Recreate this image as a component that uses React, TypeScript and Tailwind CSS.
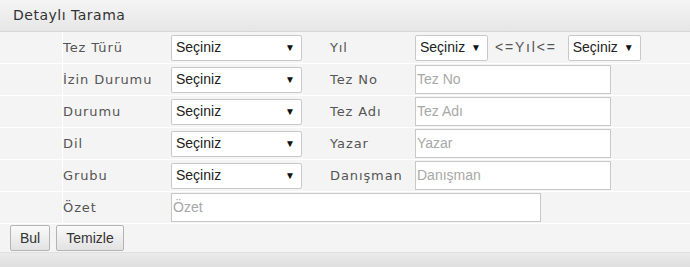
import React from 'react';

const label = 'text-[13px] text-[#555] tracking-[0.9px] font-["DejaVu_Sans",Verdana,sans-serif]';

function Select({ w }: { w: string }) {
  return (
    <div
      className={`${w} h-[26px] flex items-center justify-between pl-[4px] pr-[6px] bg-white border border-[#c8c8c8] rounded-[2px] text-[14px] text-[#222] font-["Liberation_Sans",Arial,sans-serif]`}
    >
      <span>Seçiniz</span>
      <span className="text-[10px] text-[#111]">▼</span>
    </div>
  );
}

function TextInput({ placeholder, w }: { placeholder: string; w: string }) {
  return (
    <div
      className={`${w} h-[29px] flex items-center pl-[1px] bg-white border border-[#c8c8c8] text-[14px] text-[#a8a8a8] font-["Liberation_Sans",Arial,sans-serif]`}
    >
      {placeholder}
    </div>
  );
}

function Row({ children }: { children: React.ReactNode }) {
  return <div className="flex h-[32px] items-center border-b border-white">{children}</div>;
}

function Cell({ w, children, line }: { w: string; children?: React.ReactNode; line?: boolean }) {
  return (
    <div className={`${w} h-full flex items-center shrink-0 ${line ? 'border-r border-white' : ''}`}>
      {children}
    </div>
  );
}

export default function App() {
  const rows: [string, string, string][] = [
    ['İzin Durumu', 'Tez No', 'Tez No'],
    ['Durumu', 'Tez Adı', 'Tez Adı'],
    ['Dil', 'Yazar', 'Yazar'],
    ['Grubu', 'Danışman', 'Danışman'],
  ];

  return (
    <div className="w-[690px] h-[267px] bg-[#f4f4f4] flex flex-col overflow-hidden">
      <div className="h-[32px] shrink-0 flex items-center pl-[13px] bg-gradient-to-b from-[#f5f5f5] to-[#e6e6e6] border-b border-[#d6d6d6] text-[14px] text-[#333] tracking-[0.5px] font-['DejaVu_Sans',Verdana,sans-serif]">
        Detaylı Tarama
      </div>

      <Row>
        <Cell w="w-[63px]" line />
        <Cell w="w-[108px]"><span className={label}>Tez Türü</span></Cell>
        <Cell w="w-[159px]"><Select w="w-[131px]" /></Cell>
        <Cell w="w-[85px]"><span className={label}>Yıl</span></Cell>
        <div className="flex items-center h-full">
          <Select w="w-[73px]" />
          <span className="ml-[7px] mr-[11px] text-[14px] text-[#555] font-['Liberation_Sans',Arial,sans-serif] tracking-[1.8px]">
            &lt;=Yıl&lt;=
          </span>
          <Select w="w-[73px]" />
        </div>
      </Row>

      {rows.map(([l, l2, ph]) => (
        <Row key={l}>
          <Cell w="w-[63px]" line />
          <Cell w="w-[108px]"><span className={label}>{l}</span></Cell>
          <Cell w="w-[159px]"><Select w="w-[131px]" /></Cell>
          <Cell w="w-[85px]"><span className={label}>{l2}</span></Cell>
          <TextInput placeholder={ph} w="w-[196px]" />
        </Row>
      ))}

      <Row>
        <Cell w="w-[63px]" line />
        <Cell w="w-[108px]"><span className={label}>Özet</span></Cell>
        <TextInput placeholder="Özet" w="w-[370px]" />
      </Row>

      <div className="h-[28px] shrink-0 flex items-center gap-[6px] pl-[10px]">
        {['Bul', 'Temizle'].map((b) => (
          <button
            key={b}
            className="h-[26px] px-[9px] bg-gradient-to-b from-[#fafafa] to-[#e2e2e2] border border-[#b4b4b4] rounded-[2px] text-[14px] text-[#333] font-['Liberation_Sans',Arial,sans-serif]"
          >
            {b}
          </button>
        ))}
      </div>

      <div className="flex-1 bg-gradient-to-b from-[#ebebeb] to-[#dedede] border-t border-[#e0e0e0]" />
    </div>
  );
}
